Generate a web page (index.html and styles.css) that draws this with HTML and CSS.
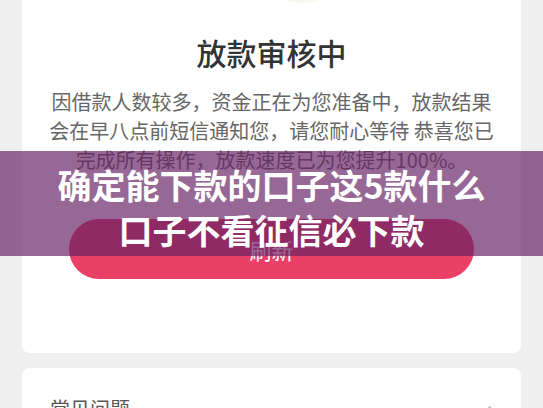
FILE: index.html
```html
<!DOCTYPE html>
<html lang="zh-CN">
<head>
    <meta charset="UTF-8">
    <meta name="viewport" content="width=device-width, initial-scale=1.0">
    <title>放款审核中</title>
    <link rel="stylesheet" href="styles.css">
</head>
<body>
    <div class="page">
        <div class="status-card">
            <div class="status-icon"></div>
            <h2 class="status-title">放款审核中</h2>
            <p class="status-text">因借款人数较多，资金正在为您准备中，放款结果会在早八点前短信通知您，请您耐心等待 恭喜您已完成所有操作，放款速度已为您提升100%。</p>
            <button type="button" class="refresh-btn">刷新</button>
        </div>

        <div class="faq-card">
            <span class="faq-title">常见问题</span>
            <span class="faq-arrow"></span>
        </div>
    </div>

    <!-- headline banner laid over the page -->
    <div class="banner">
        <p>确定能下款的口子这5款什么<br>口子不看征信必下款</p>
    </div>
</body>
</html>
```

FILE: styles.css
```css
/* General styling */
body {
    font-family: "Noto Sans CJK SC", "Noto Sans", sans-serif;
    background-color: #efefef;
    margin: 0;
    overflow: hidden;
}

.page {
    padding: 0 22px;
}

.status-card {
    background-color: #fff;
    border-radius: 8px;
    margin-top: -80px;
    padding: 20px 24px 74px;
    text-align: center;
}

.status-icon {
    width: 90px;
    height: 63px;
    margin: 0 auto;
    border-radius: 0 0 45px 45px;
    background-color: #faf8ee;
    position: relative;
    left: 30px;
}

.status-title {
    margin: 29px 0 0;
    font-size: 30px;
    line-height: 40px;
    font-weight: 500;
    color: #333;
}

.status-text {
    margin: 15px 0 0;
    font-size: 20px;
    line-height: 29px;
    color: #666;
}

.refresh-btn {
    display: block;
    width: 405px;
    height: 60px;
    margin: 45px auto 0;
    border: none;
    border-radius: 30px;
    background-color: #ea4068;
    color: #fff;
    font-family: inherit;
    font-size: 22px;
}

.faq-card {
    display: flex;
    justify-content: space-between;
    align-items: center;
    margin-top: 15px;
    padding: 26px 26px 26px 28px;
    background-color: #fff;
    border-radius: 8px;
}

.faq-title {
    font-size: 20px;
    line-height: 30px;
    color: #555;
}

.faq-arrow {
    width: 9px;
    height: 9px;
    margin-top: 8px;
    border-top: 2px solid #bbb;
    border-right: 2px solid #bbb;
    transform: rotate(45deg);
}

/* Banner overlay */
.banner {
    position: absolute;
    top: 151px;
    left: 0;
    right: 0;
    height: 105px;
    background-color: rgba(101, 31, 98, 0.675);
    text-align: center;
}

.banner p {
    margin: 0;
    padding-top: 11px;
    font-size: 34px;
    line-height: 45px;
    font-weight: 700;
    color: #fff;
}
```
